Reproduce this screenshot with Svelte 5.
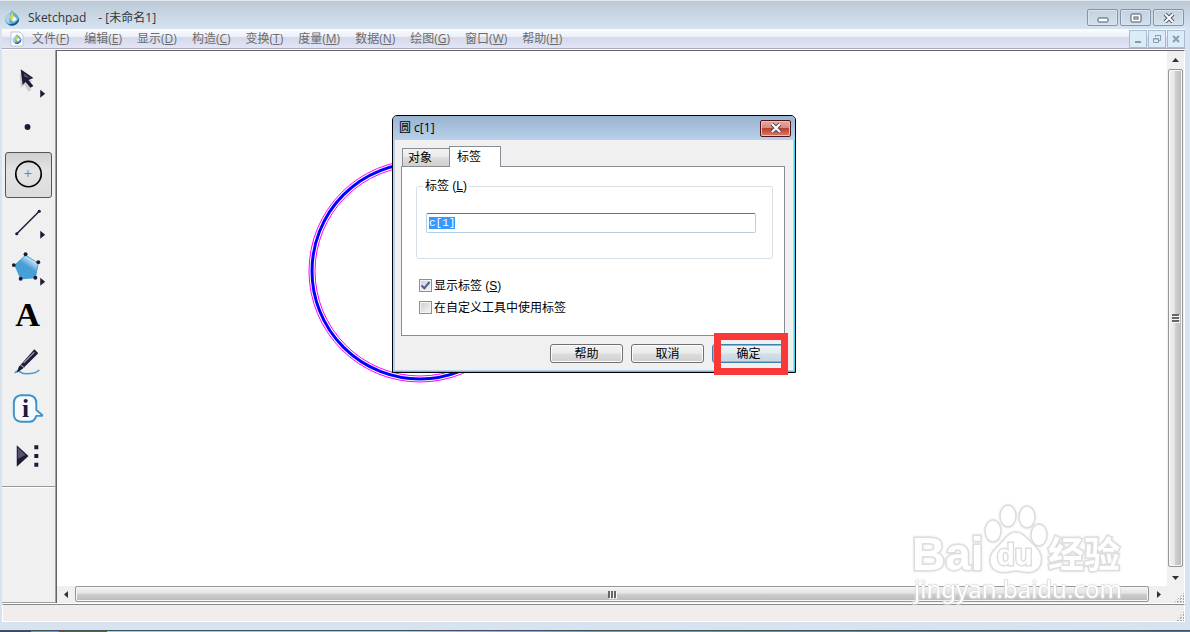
<script lang="ts">
  import { onMount } from 'svelte';

  interface MenuEntry {
    label: string;
    key: string;
  }

  const menus: MenuEntry[] = [
    { label: '文件', key: 'F' },
    { label: '编辑', key: 'E' },
    { label: '显示', key: 'D' },
    { label: '构造', key: 'C' },
    { label: '变换', key: 'T' },
    { label: '度量', key: 'M' },
    { label: '数据', key: 'N' },
    { label: '绘图', key: 'G' },
    { label: '窗口', key: 'W' },
    { label: '帮助', key: 'H' }
  ];

  const tools = [
    { id: 'arrow', name: '移动箭头工具', more: true },
    { id: 'point', name: '点工具', more: false },
    { id: 'compass', name: '圆工具', more: false },
    { id: 'segment', name: '线段直尺工具', more: true },
    { id: 'polygon', name: '多边形工具', more: true },
    { id: 'text', name: '文本工具', more: false },
    { id: 'marker', name: '标记工具', more: false },
    { id: 'info', name: '信息工具', more: false },
    { id: 'custom', name: '自定义工具', more: false }
  ];

  let activeTool = $state('compass');
  let labelText = $state('c[1]');
  let showLabel = $state(true);
  let useInTools = $state(false);
  let labelInput: HTMLInputElement;

  onMount(() => {
    labelInput.focus();
    labelInput.select();
  });
</script>

{#snippet drop()}
  <path d="M8 0C9 3 15 4 15 9A7 7 0 0 1 1 9C1 5 6 5 8 0Z" fill="#58aed6" />
  <path d="M1 8C2 5 5 5 6 3C7 7 4 9 6 14C3 13 1 11 1 8Z" fill="#a8d4e8" />
  <path d="M4 14C9 15 13 13 15 8C16 14 8 18 4 14Z" fill="#1c4f86" />
  <path d="M8 1L10 7L8 12L6 8Z" fill="#f0cf45" />
  <path d="M10 6L13 9L10 12L8 10Z" fill="#e6f6fb" />
{/snippet}

<div class="window">
  <header class="titlebar">
    <svg class="app-icon" width="16" height="16" viewBox="0 0 16 16">{@render drop()}</svg>
    <span class="app-name">Sketchpad</span>
    <span class="doc-name">- [未命名1]</span>
    <div class="caption-buttons">
      <button aria-label="最小化">
        <svg width="12" height="10" viewBox="0 0 12 10"><rect x="1" y="5" width="10" height="4" rx="1" fill="#fff" stroke="#4b5668" /></svg>
      </button>
      <button aria-label="还原">
        <svg width="12" height="10" viewBox="0 0 12 10"><rect x="1" y="1" width="10" height="8" rx="1" fill="#fff" stroke="#4b5668" /><rect x="4" y="4" width="4" height="2" fill="#fff" stroke="#4b5668" /></svg>
      </button>
      <button aria-label="关闭">
        <svg width="12" height="10" viewBox="0 0 12 10"><path d="M2 1L10 9M10 1L2 9" stroke="#4b5668" stroke-width="4" /><path d="M2 1L10 9M10 1L2 9" stroke="#fff" stroke-width="2" /></svg>
      </button>
    </div>
  </header>

  <nav class="menubar">
    <svg class="doc-icon" width="14" height="16" viewBox="0 0 14 16">
      <path d="M1 1H10L13 4V15H1Z" fill="#fff" stroke="#c3c3cf" />
      <g transform="translate(2 3) scale(.62)">{@render drop()}</g>
    </svg>
    <div class="menus">
      {#each menus as menu}
        <button class="menu">{menu.label}(<u>{menu.key}</u>)</button>
      {/each}
    </div>
    <div class="mdi-buttons">
      <button aria-label="最小化文档">
        <svg width="10" height="10" viewBox="0 0 10 10"><path d="M2 8H8" stroke="#8a9bb0" stroke-width="2" /></svg>
      </button>
      <button aria-label="还原文档">
        <svg width="10" height="10" viewBox="0 0 10 10" fill="none" stroke="#8a9bb0"><path d="M3.500 3V1.500H8.500V6.500H7M3 1.500H9" /><path d="M1.500 4.500H6.500V8.500H1.500ZM1 5H7" /></svg>
      </button>
      <button aria-label="关闭文档">
        <svg width="10" height="10" viewBox="0 0 10 10"><path d="M2 2L8 8M8 2L2 8" stroke="#8a9bb0" stroke-width="2" /></svg>
      </button>
    </div>
  </nav>

  <div class="workspace">
    <aside class="toolbox">
      <div class="tools">
        {#each tools as tool (tool.id)}
          <button
            class="tool"
            class:active={activeTool === tool.id}
            aria-label={tool.name}
            onclick={() => (activeTool = tool.id)}
          >
            <svg width="46" height="44" viewBox="0 0 46 44">
              {#if tool.id === 'arrow'}
                <path d="M14 14L15 29L19 26L23 33L26 31L22 24L27 22Z" fill="#999" opacity=".4" />
                <path d="M15 10L17 26L20 23L25 29L28 27L23 21L28 19Z" fill="#1d1a38" />
                <path d="M18 14L25 19L19 18Z" fill="#56536d" />
              {:else if tool.id === 'point'}
                <circle cx="22" cy="21" r="3" fill="#1d1a38" />
              {:else if tool.id === 'compass'}
                <circle cx="23" cy="21" r="13" fill="none" stroke="#000" stroke-width="1.700" />
                <path d="M22.500 17V24M19 20.500H26" stroke="#2b93cf" />
              {:else if tool.id === 'segment'}
                <path d="M11 34L34 11" stroke="#1d1a38" stroke-width="1.500" />
                <circle cx="11" cy="34" r="1.600" fill="#1d1a38" />
                <circle cx="34" cy="11" r="1.600" fill="#1d1a38" />
              {:else if tool.id === 'polygon'}
                <defs>
                  <linearGradient id="pentagon" x1=".8" y1="0" x2=".5" y2=".45">
                    <stop offset="0.200" stop-color="#e9f4fb" />
                    <stop offset="1" stop-color="#489ed6" />
                  </linearGradient>
                </defs>
                <path d="M20 8L33 16L30 31L15 32L9 18Z" fill="url(#pentagon)" stroke="#489ed6" />
                <g fill="#1d1a38">
                  <circle cx="20" cy="7" r="2" /><circle cx="33" cy="15" r="2" /><circle cx="30" cy="31" r="2" />
                  <circle cx="15" cy="32" r="2" /><circle cx="8" cy="18" r="2" />
                </g>
              {:else if tool.id === 'text'}
                <text x="22" y="32" text-anchor="middle" font-family="'Liberation Serif', serif" font-weight="700" font-size="35">A</text>
              {:else if tool.id === 'marker'}
                <path d="M9 32C15 27 12 33 20 33C27 33 32 32 34 29" fill="none" stroke="#4a9bd0" stroke-width="1.700" />
                <path d="M11 32L13 26L29 8L33 12L17 28Z" fill="#1d1a38" />
                <path d="M18 22L29 11M15 24L19 27" stroke="#9996a8" stroke-width="1.200" />
              {:else if tool.id === 'info'}
                <path d="M15 7H24Q31 8 31 15V22L37 27V28H31Q29 34 24 34H15Q8 33 8 26V15Q8 8 15 7Z" fill="#f7fafc" stroke="#3f92cc" stroke-width="2" stroke-linejoin="round" />
                <text x="20" y="29" text-anchor="middle" font-family="'Liberation Serif', serif" font-weight="700" font-size="26" fill="#1d1a38">i</text>
              {:else}
                <path d="M11 10V32L23 21Z" fill="#1d1a38" />
                <path d="M12 12L20 20L12 24Z" fill="#55526d" />
                <path d="M29 10H33V14H29ZM29 19H33V23H29ZM29 28H33V32H29Z" fill="#1d1a38" />
              {/if}
              {#if tool.more}
                <path d="M35 31V39L40 35Z" fill="#1d1a38" />
              {/if}
            </svg>
          </button>
        {/each}
      </div>
    </aside>

    <main class="document">
      <div class="canvas-row">
        <svg class="canvas">
          <g fill="none">
            <circle cx="363" cy="220" r="111" stroke="#f0f" />
            <circle cx="363" cy="220" r="105" stroke="#f0f" />
            <circle cx="363" cy="220" r="108" stroke="#00f" stroke-width="3" />
          </g>
        </svg>
        <div class="scrollbar vertical">
          <button aria-label="向上滚动"><svg width="7" height="4" viewBox="0 0 7 4"><path d="M0 4L3.500 0L7 4Z" fill="#333" /></svg></button>
          <div class="thumb"><i></i><i></i><i></i></div>
          <button aria-label="向下滚动"><svg width="7" height="4" viewBox="0 0 7 4"><path d="M0 0L3.500 4L7 0Z" fill="#333" /></svg></button>
        </div>
      </div>
      <div class="scroll-row">
        <div class="scrollbar horizontal">
          <button aria-label="向左滚动"><svg width="4" height="7" viewBox="0 0 4 7"><path d="M4 0L0 3.500L4 7Z" fill="#333" /></svg></button>
          <div class="thumb"><i></i><i></i><i></i></div>
          <button aria-label="向右滚动"><svg width="4" height="7" viewBox="0 0 4 7"><path d="M0 0L4 3.500L0 7Z" fill="#333" /></svg></button>
        </div>
        <div class="grip"></div>
      </div>
    </main>
  </div>

  <footer class="statusbar"><div class="grip"></div></footer>
  <div class="desktop-edge"></div>

  <svg class="watermark" width="216" height="106" viewBox="0 0 216 106">
    <g fill="#fff" stroke="#dedede" stroke-width="1.500">
      <ellipse cx="83" cy="31" rx="8" ry="11" />
      <ellipse cx="98" cy="16" rx="8" ry="11" />
      <ellipse cx="117" cy="17" rx="8" ry="11" />
      <ellipse cx="129" cy="35" rx="8" ry="11" />
      <path d="M106 32C114 32 118 40 125 46C134 54 134 69 122 72C114 74 111 71 106 71C99 71 96 74 89 72C78 69 77 56 86 48C94 41 97 32 106 32Z" />
      <g font-family="'Liberation Sans', 'Noto Sans CJK SC', sans-serif" font-weight="700" paint-order="stroke" stroke-width="3">
        <text x="2" y="70" font-size="46">Bai</text>
        <text x="87" y="65" font-size="29">du</text>
        <text x="138" y="68" font-size="36">经验</text>
      </g>
    </g>
    <text class="site" x="4" y="98" font-size="24">jingyan.baidu.com</text>
  </svg>

  <div class="dialog" role="dialog" aria-label="圆 c[1]">
    <div class="dialog-title">
      <span>圆 c[1]</span>
      <button class="dialog-close" aria-label="关闭对话框">
        <svg width="12" height="10" viewBox="0 0 12 10"><path d="M2 1L10 9M10 1L2 9" stroke="#5a4a5a" stroke-width="4" /><path d="M2 1L10 9M10 1L2 9" stroke="#fff" stroke-width="2" /></svg>
      </button>
    </div>
    <div class="dialog-body">
      <div class="tabs" role="tablist">
        <button class="tab" role="tab" aria-selected="false">对象</button>
        <button class="tab selected" role="tab" aria-selected="true">标签</button>
      </div>
      <div class="panel" role="tabpanel">
        <fieldset>
          <legend><label for="label-text">标签 (<u>L</u>)</label></legend>
          <input id="label-text" type="text" bind:this={labelInput} bind:value={labelText} />
        </fieldset>
        <label class="check">
          <input type="checkbox" bind:checked={showLabel} />
          <span>显示标签 (<u>S</u>)</span>
        </label>
        <label class="check">
          <input type="checkbox" bind:checked={useInTools} />
          <span>在自定义工具中使用标签</span>
        </label>
      </div>
      <div class="actions">
        <button>帮助</button>
        <button>取消</button>
        <button class="default">确定</button>
      </div>
    </div>
    <div class="highlight"></div>
  </div>
</div>

<style>
  :global(body) {
    margin: 0;
  }

  .window {
    position: relative;
    display: flex;
    flex-direction: column;
    min-height: 100vh;
    overflow: hidden;
    background: #d6e4f1;
    color: #000;
    font: 12px/16px 'Liberation Sans', 'Noto Sans CJK SC', sans-serif;
  }

  button {
    padding: 0;
    margin: 0;
    border: none;
    background: none;
    color: inherit;
    font: inherit;
    display: flex;
    align-items: center;
    justify-content: center;
  }

  .titlebar {
    display: flex;
    align-items: center;
    height: 29px;
    padding: 5px 6px 0 4px;
    box-sizing: border-box;
    border-top: 1px solid #e2e8ef;
    background: linear-gradient(#bccad8, #d6e4f1);
    color: #2f3540;
    font-family: 'Open Sans', 'Noto Sans CJK SC', sans-serif;
  }

  .app-name {
    margin: 0 12px 0 8px;
  }

  .caption-buttons {
    display: flex;
    gap: 2px;
    margin-left: auto;
  }

  .caption-buttons button {
    width: 31px;
    height: 17px;
    border: 1px solid #8494ae;
    border-radius: 2px;
    box-shadow: inset 0 0 0 1px #d9e4ef;
  }

  .menubar {
    display: flex;
    align-items: center;
    height: 19px;
    margin: 0 5px 0 2px;
    padding-left: 8px;
    border-bottom: 1px solid #a9acbf;
    background: linear-gradient(#fdfdfe, #eceff8 40%, #d5d9ec 45%, #e2e5f5);
    color: #6b6b6b;
    font-family: 'Open Sans', 'Noto Sans CJK SC', sans-serif;
  }

  .menus {
    display: flex;
    gap: 1px;
    padding: 1px 0 0 1px;
  }

  .menu {
    padding: 0 7px;
  }

  .mdi-buttons {
    display: flex;
    gap: 1px;
    margin-left: auto;
  }

  .mdi-buttons button {
    width: 18px;
    height: 18px;
    border: 1px solid #a9bbcf;
    background: #dcebf8;
  }

  .workspace {
    flex: 1;
    display: flex;
    margin: 0 5px 0 2px;
    border-top: 1px solid #fff;
    border-bottom: 1px solid #fff;
    background: #f0f0f0;
  }

  .toolbox {
    width: 53px;
    border-right: 1px solid #a0a0a0;
    border-bottom: 1px solid #a0a0a0;
  }

  .tools {
    padding: 8px 3px 6px;
    display: flex;
    flex-direction: column;
    gap: 1px;
    border-bottom: 1px solid #999;
    box-shadow: 0 1px #fff;
  }

  .tool {
    height: 46px;
    border: 1px solid transparent;
    border-radius: 3px;
    box-sizing: border-box;
  }

  .tool.active {
    border-color: #555;
    background: linear-gradient(#cfcfcf, #e4e4e4 40%, #dcdcdc);
  }

  .document {
    flex: 1;
    display: flex;
    flex-direction: column;
    border-top: 1px solid #646464;
    border-left: 1px solid #646464;
    border-right: 1px solid #fff;
    background: #f0f0f0;
  }

  .canvas-row {
    flex: 1;
    display: flex;
    background: #fff;
  }

  .canvas {
    flex: 1;
    height: auto;
  }

  .scroll-row {
    display: flex;
  }

  .scrollbar {
    display: flex;
    background: #f0f0f0;
  }

  .scrollbar button {
    width: 17px;
    height: 17px;
  }

  .vertical {
    flex-direction: column;
  }

  .horizontal {
    flex: 1;
  }

  .thumb {
    flex: 1;
    display: flex;
    align-items: center;
    justify-content: center;
    gap: 1px;
    border: 1px solid #969696;
    border-radius: 2px;
    box-shadow: inset 0 0 0 1px #f6f6f6;
  }

  .horizontal .thumb {
    margin: 0 1px 1px;
    background: linear-gradient(#f3f3f3, #e4e4e6 45%, #cfcfd1 50%, #b9b9bb);
  }

  .vertical .thumb {
    flex-direction: column;
    margin: 1px 1px 2px;
    background: linear-gradient(to right, #f3f3f3, #e4e4e6 45%, #cfcfd1 50%, #b9b9bb);
  }

  .thumb i {
    background: #666;
    box-shadow: 1px 1px #f6f6f6;
  }

  .horizontal .thumb i {
    width: 2px;
    height: 7px;
  }

  .vertical .thumb i {
    width: 7px;
    height: 2px;
  }

  .grip {
    width: 17px;
    align-self: stretch;
    background: repeating-conic-gradient(#a9a9a9 0 25%, transparent 0 100%) 0 0 / 3px 3px;
    clip-path: polygon(100% 40%, 100% 100%, 40% 100%);
  }

  .statusbar {
    display: flex;
    justify-content: flex-end;
    height: 16px;
    margin: 0 5px 8px 2px;
    border: 1px solid #fff;
    border-top-color: #8a8a8a;
    background: #f0edec;
  }

  .statusbar .grip {
    width: 14px;
  }

  .desktop-edge {
    height: 1px;
    border-top: 1px solid #4a4f58;
    background: linear-gradient(to right, #2c4c80 0 31px, #3aa6dc 31px 59px, #4c6b24 59px 107px, #8fd0ea 107px 400px, #3cb1e2 50%, #1c7ed0);
  }

  .dialog {
    position: absolute;
    left: 392px;
    top: 115px;
    width: 404px;
    box-sizing: border-box;
    border: 1px solid #000;
    border-radius: 5px 5px 0 0;
    background: #b9d1ea;
    box-shadow: inset -1px -1px #3fd0e8;
  }

  .dialog-title {
    display: flex;
    justify-content: space-between;
    align-items: center;
    height: 24px;
    padding: 0 4px 0 6px;
    border-radius: 4px 4px 0 0;
    background: linear-gradient(#99b4d1, #b9d1ea);
    font-family: 'Open Sans', 'Noto Sans CJK SC', sans-serif;
  }

  .dialog-close {
    width: 31px;
    height: 17px;
    border: 1px solid #4f1420;
    border-radius: 2px;
    background: linear-gradient(#e8aaa0, #d98a7c 45%, #b9402a 50%, #d6806a);
    box-shadow: inset 0 0 0 1px #ecc0b8;
  }

  .dialog-body {
    margin: 0 2px 2px;
    padding: 6px 8px 7px 6px;
    background: #f0f0f0;
  }

  .tabs {
    display: flex;
    align-items: flex-end;
    padding-left: 1px;
  }

  .tab {
    width: 47px;
    height: 18px;
    box-sizing: border-box;
    padding: 1px 12px 0 0;
    border: 1px solid #898c95;
    border-width: 1px 0 0 1px;
    background: linear-gradient(#f2f2f2, #ebebeb 50%, #dddddd 50%, #cfcfcf);
  }

  .tab.selected {
    position: relative;
    width: 52px;
    height: 21px;
    margin-bottom: -1px;
    padding-top: 0;
    border-width: 1px 1px 0 1px;
    background: #fff;
  }

  .panel {
    display: flex;
    flex-direction: column;
    gap: 6px;
    padding: 11px 11px 20px 14px;
    border: 1px solid #898c95;
    background: #fff;
  }

  fieldset {
    display: flex;
    margin: 0 0 12px;
    padding: 19px 16px 25px 9px;
    border: 1px solid #d5dfe5;
    border-radius: 3px;
    min-width: 0;
  }

  legend {
    margin-left: -3px;
    padding: 0 2px;
  }

  fieldset input {
    flex: 1;
    min-width: 0;
    height: 20px;
    box-sizing: border-box;
    padding: 0 2px;
    border: 1px solid #b5cfe7;
    border-top-color: #3d7bad;
    border-radius: 2px;
    outline: none;
    background: #fff;
    color: #000;
    font: 11px/14px 'Liberation Mono', monospace;
  }

  fieldset input::selection {
    background: #3399ff;
    color: #fff;
  }

  .check {
    display: flex;
    align-items: center;
    gap: 2px;
    padding-left: 3px;
  }

  .check input {
    appearance: none;
    width: 13px;
    height: 13px;
    box-sizing: border-box;
    margin: 0;
    border: 1px solid #8e8f8f;
    background: linear-gradient(135deg, #cbcfd5, #f6f6f6);
    box-shadow: inset 0 0 0 1px #f4f4f4;
    display: grid;
    place-items: center;
  }

  .check input:checked::after {
    content: '';
    width: 3px;
    height: 7px;
    margin-bottom: 2px;
    border: solid #4b5f97;
    border-width: 0 2px 2px 0;
    transform: rotate(40deg);
  }

  .check span {
    padding-top: 1px;
  }

  .check {
    height: 16px;
  }

  .actions {
    display: flex;
    justify-content: flex-end;
    gap: 8px;
    padding-top: 8px;
  }

  .actions button {
    width: 73px;
    height: 19px;
    border: 1px solid #707070;
    border-radius: 3px;
    background: linear-gradient(#f2f2f2, #ebebeb 48%, #dddddd 52%, #cfcfcf);
    box-shadow: inset 0 0 0 1px #fcfcfc;
  }

  .actions .default {
    border-color: #3c7fb1;
    background: linear-gradient(#eef3f6, #e3ebf0 48%, #d3dee6 52%, #c8d6de);
    box-shadow: inset 0 0 0 1px #48d1f0;
  }

  .highlight {
    position: absolute;
    right: 7px;
    bottom: -3px;
    width: 60px;
    height: 28px;
    border: 7px solid #fb3838;
    pointer-events: none;
  }

  .watermark {
    position: absolute;
    right: 64px;
    bottom: 26px;
    pointer-events: none;
    filter: drop-shadow(0 0 1px #e4e4e4);
  }

  .site {
    fill: #fff;
    stroke: #d4d4d4;
    stroke-width: 1px;
    paint-order: stroke;
    font-family: 'Noto Sans', sans-serif;
  }
</style>
